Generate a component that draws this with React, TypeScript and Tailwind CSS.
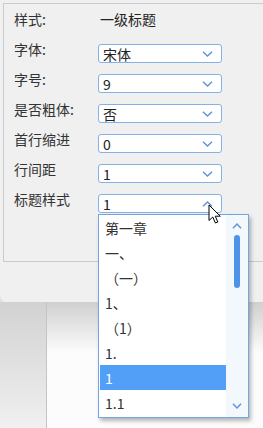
import type { ReactNode } from "react";

const FONT = "font-['Noto_Sans_CJK_SC','Microsoft_YaHei',sans-serif]";

/** Small blue chevron used by the combo boxes and the list scrollbar. */
function Chevron({ up = false, size = 11 }: { up?: boolean; size?: number }) {
  const h = Math.round(size * 0.55);
  return (
    <svg width={size} height={h} viewBox={`0 0 ${size} ${h}`} className="shrink-0">
      <path
        d={up ? `M1 ${h - 0.8} L${size / 2} 1 L${size - 1} ${h - 0.8}` : `M1 0.8 L${size / 2} ${h - 1} L${size - 1} 0.8`}
        fill="none"
        stroke="#5b93d9"
        strokeWidth="1.4"
      />
    </svg>
  );
}

function Combo({ value, open = false }: { value: string; open?: boolean }) {
  return (
    <div className="flex h-[19px] w-[124px] items-center justify-between rounded-[3px] border border-[#84b1e6] bg-white pl-[4px] pr-[8px]">
      <span className="text-[14px] leading-none text-[#222]">{value}</span>
      <Chevron up={open} />
    </div>
  );
}

function Row({ label, children }: { label: string; children: ReactNode }) {
  return (
    <div className="flex h-[30px] items-start">
      <span className="-mt-[2px] w-[84px] shrink-0 text-[14px] leading-[14px] text-[#333]">{label}</span>
      {children}
    </div>
  );
}

const headingStyles = ["第一章", "一、", "（一）", "1、", "（1）", "1.", "1", "1.1"];

export default function App() {
  return (
    <div className={`relative flex h-[428px] w-[263px] flex-col overflow-hidden bg-[#e2e2e2] ${FONT}`}>
      {/* dialog */}
      <div className="h-[302px] shrink-0 rounded-bl-[7px] bg-[#f0f0f0]">
        <div className="ml-[3px] mt-[3px] h-[259px] border-b border-l border-t border-[#cbcbcb] pl-[10px] pt-[10px]">
          <Row label="样式:">
            <span className="-mt-[2px] pl-[2px] text-[14px] leading-[14px] text-[#222]">一级标题</span>
          </Row>
          <Row label="字体:">
            <Combo value="宋体" />
          </Row>
          <Row label="字号:">
            <Combo value="9" />
          </Row>
          <Row label="是否粗体:">
            <Combo value="否" />
          </Row>
          <Row label="首行缩进">
            <Combo value="0" />
          </Row>
          <Row label="行间距">
            <Combo value="1" />
          </Row>
          <Row label="标题样式">
            <Combo value="1" open />
          </Row>
        </div>
      </div>

      {/* page behind the dialog */}
      <div className="flex flex-1">
        <div className="w-[47px] border-r border-[#c4c4c4] bg-linear-to-b from-[#d2d2d2] to-[#f0f0f0]" />
        <div className="flex-1 bg-linear-to-b from-[#d0d0d0] to-[#fcfcfc] to-[40%]" />
      </div>

      {/* open drop-down list */}
      <div className="absolute left-[98px] top-[214px] flex h-[204px] w-[151px] border border-[#72a6e2] bg-white shadow-[2px_3px_4px_rgba(0,0,0,0.28)]">
        <ul className="w-[127px] pl-[1px]">
          {headingStyles.map((item) => {
            const selected = item === "1";
            return (
              <li
                key={item}
                className={`flex h-[25px] items-center pl-[5px] text-[14px] leading-none ${
                  selected ? "bg-[#529ff7] text-white" : "text-[#333]"
                }`}
              >
                {item}
              </li>
            );
          })}
        </ul>
        <div className="flex flex-1 flex-col items-center bg-[#f3f8fd] pb-[8px] pt-[8px]">
          <Chevron up size={10} />
          <div className="mt-[6px] h-[53px] w-[6px] rounded-full bg-[#4d93ea]" />
          <div className="flex-1" />
          <Chevron size={10} />
        </div>
      </div>

      {/* mouse pointer */}
      <svg className="absolute left-[208px] top-[204px]" width="14" height="21" viewBox="0 0 14 21">
        <path
          d="M1 1 L1 16.5 L4.8 13 L7.4 19 L9.8 18 L7.3 12.2 L12.3 12.2 Z"
          fill="white"
          stroke="black"
          strokeWidth="1"
          strokeLinejoin="round"
        />
      </svg>
    </div>
  );
}
